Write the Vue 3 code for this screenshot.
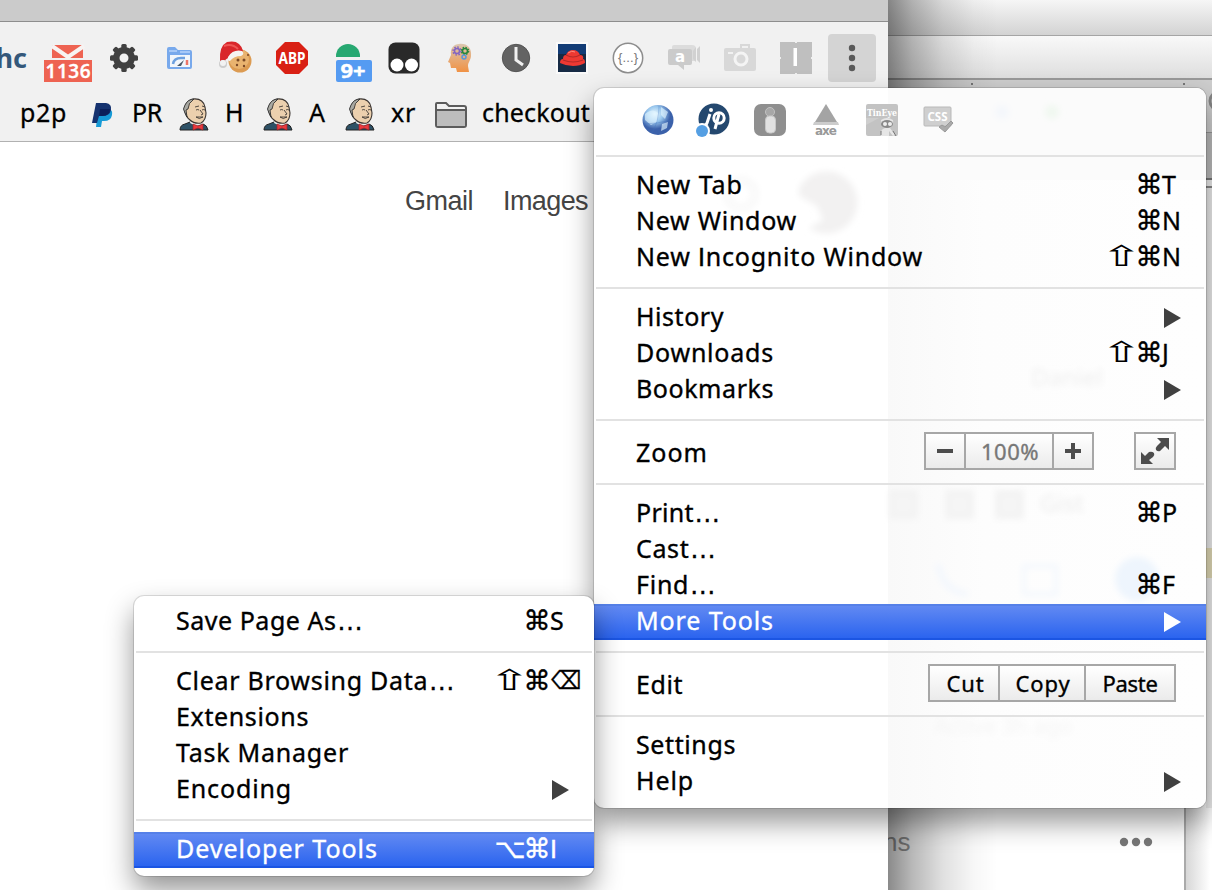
<script setup>
// Spaces a label's letters so that it takes exactly the given width.
const vFit = {
  mounted(el, { value }) {
    const n = el.textContent.trim().length
    if (!value || !n) return
    const natural = el.getBoundingClientRect().width
    el.style.letterSpacing = (value - natural) / n + 'px'
  },
}

// Capital I and the ellipsis are set in their own families.
const parts = (text) => text.split(/(I|…)/).filter(Boolean)
const partClass = (p) => (p === 'I' ? 'bar' : p === '…' ? 'dot3' : '')
const modClass = (s) => (s === '⇧' ? 'shift' : s === '⌥' ? 'option' : 'cmd')

const mainGroups = [
  [
    { label: 'New Tab', w: 107, mods: ['⌘'], key: 'T' },
    { label: 'New Window', w: 161, mods: ['⌘'], key: 'N' },
    { label: 'New Incognito Window', w: 287, mods: ['⇧', '⌘'], key: 'N' },
  ],
  [
    { label: 'History', w: 88, arrow: true },
    { label: 'Downloads', w: 138, mods: ['⇧', '⌘'], key: 'J' },
    { label: 'Bookmarks', w: 138, arrow: true },
  ],
  [{ label: 'Zoom', w: 72, zoom: true }],
  [
    { label: 'Print…', w: 85, mods: ['⌘'], key: 'P' },
    { label: 'Cast…', w: 81 },
    { label: 'Find…', w: 81, mods: ['⌘'], key: 'F' },
    { label: 'More Tools', w: 138, arrow: true, active: true },
  ],
  [{ label: 'Edit', w: 47, edit: true }],
  [
    { label: 'Settings', w: 100 },
    { label: 'Help', w: 58, arrow: true },
  ],
]

const subGroups = [
  [{ label: 'Save Page As…', w: 188, mods: ['⌘'], key: 'S' }],
  [
    { label: 'Clear Browsing Data…', w: 280, mods: ['⇧', '⌘'], key: '⌫', sym: true },
    { label: 'Extensions', w: 133 },
    { label: 'Task Manager', w: 173 },
    { label: 'Encoding', w: 116, arrow: true },
  ],
  [{ label: 'Developer Tools', w: 202, mods: ['⌥', '⌘'], key: 'I', active: true }],
]

const menus = [
  { name: 'main', groups: mainGroups },
  { name: 'sub', groups: subGroups },
]

const bookmarks = [
  { label: 'p2p', w: 47, box: 70 },
  { icon: 'paypal', label: 'PR', w: 30, box: 89 },
  { icon: 'butler', label: 'H', w: 19, box: 84 },
  { icon: 'butler', label: 'A', w: 17, box: 82 },
  { icon: 'butler', label: 'xr', w: 25, box: 88 },
  { icon: 'folder', label: 'checkout', w: 108, box: 160 },
]
const teeth = [0, 45, 90, 135, 180, 225, 270, 315]
</script>

<template>
  <div class="screen">
    <div class="back">
      <div class="b1"></div>
      <div class="b2"></div>
      <div class="b3"></div>
      <div class="b4"></div>
      <div class="b5"></div>
      <div class="b6">
        <div class="tag"></div>
        <span class="ns">ns</span>
        <svg class="dots" width="34" height="10"><g fill="#777"><circle cx="5" cy="5" r="4.2"/><circle cx="17" cy="5" r="4.2"/><circle cx="29" cy="5" r="4.2"/></g></svg>
        <div class="edge"></div>
      </div>
      <svg class="marks" width="324" height="60">
        <rect x="83" y="5" width="2" height="2" fill="#777"/><rect x="295" y="5" width="2" height="2" fill="#777"/>
        <circle cx="331" cy="23" r="9" fill="none" stroke="#858585" stroke-width="3"/>
      </svg>
      <div class="shade"></div>
    </div>

    <div class="window">
      <div class="strip"></div>
      <div class="chrome">
        <div class="tools">
          <div class="tool hc">hc</div>
          <div class="tool"><svg width="48" height="48"><path d="M9 11h30v13H8V13z" fill="#ee6352"/><path d="M8 12l16 11 16-11" fill="none" stroke="#f7f3f2" stroke-width="4"/><rect y="26" width="48" height="22" fill="#ee6352"/><text x="24" y="44" class="count" textLength="45">1136</text></svg></div>
          <div class="tool"><svg width="32" height="32" viewBox="-16 -16 32 32"><circle r="7.7" fill="none" stroke="#404040" stroke-width="6.4"/><rect v-for="a in teeth" :key="a" x="-2.7" y="-14" width="5.4" height="6" rx="1.5" fill="#404040" :transform="`rotate(${a})`"/></svg></div>
          <div class="tool"><svg width="28" height="26"><path d="M1 4q0-2 2-2h6l3 3h12q2 0 2 2v15q0 2-2 2H3q-2 0-2-2z" fill="#78a9ec"/><path d="M4 10h20v12H4z" fill="#f2f6fb"/><path d="M3 6h8m3 1h10" stroke="#b5d2fa" stroke-width="1.500"/><path d="M7 19q1-6 8-6h4" fill="none" stroke="#6da0df" stroke-width="2.500"/><path d="M11 21l7-6-3 6z" fill="#4b5967"/><path d="M21 15v5" stroke="#ed7568" stroke-width="2.500"/></svg></div>
          <div class="tool"><svg width="34" height="34"><circle cx="21" cy="20" r="11.5" fill="#dc9b52"/><circle cx="20" cy="18" r="10" fill="#e9b36f"/><g fill="#7b4926"><circle cx="19" cy="19" r="1.500"/><circle cx="25" cy="19" r="1.500"/><circle cx="18" cy="24" r="1.200"/><circle cx="25" cy="25" r="1.200"/><circle cx="29" cy="14" r="1"/></g><path d="M1 20Q0 5 8 1q13-3 16 9L10 17q-4 0-5 6z" fill="#d9262b"/><path d="M5 5q8-3 14 3" fill="none" stroke="#ef5554" stroke-width="2"/><path d="M9 16q5-8 14-6 3 3-1 5-7 0-11 5-3 0-2-4z" fill="#f5f3f2"/><circle cx="4" cy="23" r="4" fill="#ccc"/><circle cx="4" cy="22" r="3" fill="#f2f2f2"/></svg></div>
          <div class="tool"><svg width="32" height="32"><path d="M9 0h14l9 9v14l-9 9H9l-9-9V9z" fill="#d92014"/><text x="16" y="22" class="abp" textLength="27" lengthAdjust="spacingAndGlyphs">ABP</text></svg></div>
          <div class="tool"><svg width="48" height="48"><path d="M12 23V22a12 12 0 0 1 24 0v1z" fill="#27a871"/><rect x="12" y="26" width="36" height="22" rx="2" fill="#559bf2"/><text x="29" y="44" class="count nine" textLength="25" lengthAdjust="spacingAndGlyphs">9+</text></svg></div>
          <div class="tool"><svg width="32" height="32"><rect x=".5" y=".5" width="31" height="31" rx="7" fill="#292929"/><circle cx="9" cy="23" r="6.5" fill="#fff"/><circle cx="23.500" cy="23" r="6.500" fill="#fff"/></svg></div>
          <div class="tool"><svg width="32" height="32"><defs><linearGradient id="skin" x2="0" y2="1"><stop stop-color="#dcc7b0"/><stop offset="1" stop-color="#f09245"/></linearGradient></defs><path d="M15 2c8-1 13 4 12 12-.5 5-3 6-3 10l1 6H13l-1-4H7l-1-5-2-1 3-7C6 6 10 2 15 2z" fill="url(#skin)"/><g fill="none"><circle cx="13" cy="9" r="2.500" stroke="#8064c4" stroke-width="1.500"/><circle cx="13" cy="9" r="4" stroke="#8064c4" stroke-width="1.500" stroke-dasharray="1.600 1.500"/><circle cx="21" cy="9" r="2.500" stroke="#24873b" stroke-width="1.500"/><circle cx="21" cy="9" r="3.700" stroke="#24873b" stroke-width="1.200" stroke-dasharray="1.500 1.400"/><circle cx="20" cy="15" r="2" stroke="#5b96d6" stroke-width="1.500"/></g></svg></div>
          <div class="tool"><svg width="32" height="32"><circle cx="16" cy="16" r="13.700" fill="#636363" stroke="#555" stroke-width="1"/><path d="M16 5v13l7 5" fill="none" stroke="#f1f1f1" stroke-width="3"/></svg></div>
          <div class="tool"><svg width="32" height="32"><rect width="32" height="32" fill="#fafafa"/><rect x="2" y="2" width="28" height="28" fill="#172b45"/><path d="M2 2h28v10H2z" fill="#123c76"/><path d="M4 21q0-4 3-4 0-4 3-4 2-5 7-5t7 5q4 0 3 4 2 0 2 4-5 3-12 3T4 21z" fill="#ee3932"/><path d="M10 13q7 4 14 0M7 18q10 4 20 0" stroke="#b52a28" stroke-width="1.200" fill="none"/><path d="M12 11q4-3 7-1" stroke="#ff8b7d" fill="none"/></svg></div>
          <div class="tool"><svg width="32" height="32"><circle cx="16" cy="16" r="14.700" fill="#fff" stroke="#8d8d8d" stroke-width="1.500"/><text x="16" y="20" class="brace" textLength="20">{...}</text></svg></div>
          <div class="tool"><svg width="34" height="32"><path d="M5 5q0-2 2-2h18q4 0 4 4v12H5z" fill="#dcdcdc"/><path d="M26 9l3-4v15l-3-3zM30 7l3-3v17l-3-3z" fill="#d1d1d1"/><path d="M1 9q0-2 2-2h20q2 0 2 2v12q0 2-2 2h-6v5l-6-5H3q-2 0-2-2z" fill="#cbcbcb"/><text x="13" y="20" class="a">a</text></svg></div>
          <div class="tool"><svg width="32" height="32"><path d="M0 8q0-2 2-2h14V2h10v4h4q2 0 2 2v19q0 2-2 2H2q-2 0-2-2z" fill="#d8d8d8"/><path d="M18 4h6v2h-6zM4 10h5v2H4z" fill="#f1f1f1"/><circle cx="17" cy="17" r="6" fill="none" stroke="#f4f4f4" stroke-width="3"/></svg></div>
          <div class="tool"><svg width="32" height="32"><rect width="32" height="32" fill="#bfbfbf"/><rect x="13.500" y="6" width="3.500" height="18" fill="#fff"/><path d="M15 0h2v1h-2zM15 31h2v1h-2zM0 15h1v2H0zM31 15h1v2h-1z" fill="#eee"/></svg></div>
          <div class="tool more"><svg width="8" height="28"><g fill="#5a5a5a"><circle cx="4" cy="4" r="3.200"/><circle cx="4" cy="14" r="3.200"/><circle cx="4" cy="24" r="3.200"/></g></svg></div>
        </div>
        <div class="bookmarks">
          <div v-for="(b, i) in bookmarks" :key="i" class="bm" :style="{ width: b.box + 'px' }">
            <svg v-if="b.icon === 'paypal'" class="pp" width="20" height="26"><path d="M6 8h10q5-1 4 5-1 6-8 6h-2l-1 6H4z" fill="#179bd7"/><path d="M4 1h10q6 1 5 7-1 6-9 6H7L5 21H0z" fill="#15326f"/><path d="M8 7h10q0 7-8 7H7z" fill="#0b205a"/></svg>
            <svg v-else-if="b.icon === 'butler'" class="jk" width="29" height="33"><path d="M0 32q0-5 5-6l5-2 13 2q4 1 5 6z" fill="#2d5166" stroke="#222"/><path d="M10 25l6 3 7-2-1-3-11-2z" fill="#eee"/><path d="M5 14Q4 3 13 1q10-1 12 8l1 6q0 7-5 10-7 1-11-3-4-3-5-8z" fill="#ecd0ae" stroke="#3a3430" stroke-width="1.100"/><path d="M5 15q-3-4 0-8Q8 1 14 1 8 5 8 11l-2 1 1 7z" fill="#a8a8a2" stroke="#303030" stroke-width=".9"/><path d="M15 9l4-1m3 0 3 1M16 12q2-1 3 0m3 0q1-1 3 0M20 12l3 4-2 1m-5 2q3 3 7 0-4 0-7 0" fill="none" stroke="#403a35" stroke-width=".9"/><path d="M13 26l5 2 5-2v6l-5-2-5 2z" fill="#ea3a3e" stroke="#a02025" stroke-width=".7"/></svg>
            <svg v-else-if="b.icon === 'folder'" class="fd" width="32" height="26"><path d="M1 23V2q0-1 1-1h9l3 3h15q2 0 2 2v17q0 2-2 2H3q-2 0-2-2z" fill="#f2f2f2" stroke="#5c5c5c" stroke-width="2"/><path d="M2 9h28v15H2z" fill="#bdbdbd"/><path d="M1 8h30" stroke="#5c5c5c" stroke-width="2"/></svg>
            <span class="bl"><span v-fit="b.w" class="fit">{{ b.label }}</span></span>
          </div>
        </div>
      </div>
      <div class="page"><span v-fit="68" class="fit">Gmail</span><span v-fit="85" class="fit">Images</span></div>
    </div>

    <div v-for="m in menus" :key="m.name" class="menu" :class="m.name">
      <svg v-if="m.name === 'main'" class="ghost" width="612" height="720">
        <defs><filter id="soft"><feGaussianBlur stdDeviation="3"/></filter><linearGradient id="fall"><stop stop-color="#f9f9f9"/><stop offset=".3" stop-color="#fdfdfd"/><stop offset="1" stop-color="#fefefe"/></linearGradient></defs>
        <rect x="294" width="318" height="720" fill="url(#fall)"/><rect x="294" width="318" height="92" fill="#fbfbfb"/>
        <g filter="url(#soft)">
          <path d="M205 100a31 31 0 1 1 10 40l14-8-6-14-18-10z" fill="#f2f1f1"/><circle cx="147" cy="106" r="14" fill="none" stroke="#f9f9f9" stroke-width="8"/>
          <g fill="#f5f5f5" stroke="#f3f3f3" stroke-width="6"><rect x="298" y="405" width="23" height="23"/><rect x="354" y="405" width="23" height="23"/><rect x="404" y="405" width="23" height="23"/></g>
          <text x="446" y="424" font-size="24" fill="#ececec">Gist</text><text x="437" y="298" font-size="24" fill="#eee">Daniel</text>
          <circle cx="543" cy="491" r="22" fill="#eef5fd"/><path d="M344 476q5 28 30 30" fill="none" stroke="#f3f7fd" stroke-width="6"/><rect x="430" y="478" width="32" height="28" fill="none" stroke="#f3f7fd" stroke-width="4"/>
          <circle cx="408" cy="24" r="7" fill="#f4f7fb"/><circle cx="458" cy="24" r="7" fill="#f0f8f0"/><text x="340" y="646" font-size="22" fill="#f5f5f5">Active 3h ago</text>
        </g>
      </svg>
      <div class="body">
        <div v-if="m.name === 'main'" class="ext">
          <div><svg width="32" height="32"><defs><radialGradient id="globe" cx=".4" cy=".3"><stop stop-color="#eefaff"/><stop offset=".5" stop-color="#9ac8ee"/><stop offset="1" stop-color="#3b61aa"/></radialGradient></defs><ellipse cx="16" cy="16" rx="15.500" ry="15" fill="url(#globe)"/><path d="M3 10q8-7 14 0l-2 8-6 3-6-5zM19 3l7 5-3 7-4-4zM20 20l6-2-1 6-6 3z" fill="#e0f5ff" opacity=".65"/><path d="M2 20q12 0 28-4M10 29q7-12 7-27" stroke="#3c72bd" fill="none" opacity=".3"/></svg></div>
          <div><svg width="36" height="36"><circle cx="18" cy="17" r="15.500" fill="#24486f"/><circle cx="6" cy="29" r="8" fill="#fff"/><g fill="none" stroke="#fff" stroke-width="3"><path d="M14 12l-3 9q-1 3-4 3M19 27l4-15"/><circle cx="23" cy="16" r="5.200"/></g><circle cx="15" cy="8" r="2" fill="#fff"/><circle cx="6" cy="29" r="6" fill="#559fe3"/></svg></div>
          <div><svg width="32" height="32"><rect width="32" height="32" rx="7" fill="#8f8f8f"/><circle cx="16" cy="8" r="4.500" fill="#a7a7a7" stroke="#c2c2c2"/><rect x="11.500" y="12" width="10" height="17" rx="4" fill="#e1e1e1" stroke="#c7c7c7"/></svg></div>
          <div><svg width="32" height="32"><path d="M16 0l11 18H5z" fill="#a4a4a4"/><path d="M4 18h24l1 3H3z" fill="#ccc"/><text x="16" y="31" class="axe" textLength="22">axe</text></svg></div>
          <div><svg width="32" height="32"><rect width="32" height="32" rx="2" fill="#c3c3c3"/><path d="M0 21l13-7H0z" fill="#cecece"/><path d="M15 32q-1-7 4-8-5-4-4-8 6-4 12 0 1 4-3 8l5 7-2 1-4-5v5z" fill="#e6e6e6"/><ellipse cx="21" cy="20" rx="6" ry="4" fill="#888"/><circle cx="19" cy="20" r="2" fill="#eee"/><circle cx="24" cy="20" r="2" fill="#eee"/><path d="M15 31v-4m12 0 3 5" stroke="#777"/><text x="16" y="12" class="tin" textLength="30" lengthAdjust="spacingAndGlyphs">TinEye</text></svg></div>
          <div><svg width="32" height="32"><rect x="2" y="3" width="27" height="19" rx="1" fill="#cfcfcf" stroke="#b9b9b9"/><text x="15.500" y="17" class="css" textLength="20" lengthAdjust="spacingAndGlyphs">CSS</text><path d="M17 23l3-2 3 2 6-6 2 2-8 9z" fill="#aaa" stroke="#999"/></svg></div>
        </div>
        <template v-for="(g, gi) in m.groups" :key="gi">
          <div v-if="gi || m.name === 'main'" class="sep"></div>
          <div v-for="it in g" :key="it.label" class="row" :class="{ active: it.active, tall: it.zoom || it.edit }">
            <span v-fit="it.w" class="fit"><span v-for="(p, pi) in parts(it.label)" :key="pi" :class="partClass(p)">{{ p }}</span></span>
            <span v-if="it.key" class="keys"><span v-for="s in it.mods" :key="s" class="mod"><span :class="modClass(s)">{{ s }}</span></span><span class="key" :class="[{ sym: it.sym }, partClass(it.key)]"><span>{{ it.key }}</span></span></span>
            <svg v-if="it.arrow" class="arrow" width="17" height="20"><path d="M0 0l17 10L0 20z"/></svg>
            <span v-if="it.zoom" class="controls">
              <span class="btns"><span class="btn z1"><svg width="16" height="16"><path d="M0 6h16v4H0z"/></svg></span><span class="btn z2"><span v-fit="58" class="fit">100%</span></span><span class="btn z3"><svg width="16" height="16"><path d="M0 6h6V0h4v6h6v4h-6v6H6v-6H0z"/></svg></span></span>
              <span class="btns"><span class="btn full"><svg width="28" height="26"><path d="M16 0h12v12l-4-4-5 5q-2 1-4-1-1-2 1-4l4-4zM0 26V14l4 4 4-4q3-1 5 1 1 2-1 4l-4 3 4 4z"/></svg></span></span>
            </span>
            <span v-if="it.edit" class="controls"><span class="btns"><span class="btn e1"><span v-fit="38" class="fit">Cut</span></span><span class="btn e2"><span v-fit="55" class="fit">Copy</span></span><span class="btn e3"><span v-fit="55" class="fit">Paste</span></span></span></span>
          </div>
        </template>
      </div>
    </div>
  </div>
</template>

<style>
html, body { overflow: hidden; }
</style>

<style scoped>
* { box-sizing: border-box; }
.screen { position: relative; width: 1212px; height: 890px; overflow: hidden; background: #fff; font-family: "Noto Sans", "Open Sans", sans-serif; font-size: 25px; color: #000; }
.fit { display: inline-block; white-space: nowrap; }
svg { display: block; overflow: visible; flex: none; }
.back { position: absolute; left: 888px; top: 0; width: 324px; height: 890px; background: #fff; }
.b1 { height: 36px; background: linear-gradient(#f6f6f6, #d3d3d3); border-bottom: 1px solid #a5a5a5; }
.b2 { height: 44px; background: linear-gradient(#f9f9f9, #dedede); border-bottom: 2px solid #999; }
.b3 { height: 53px; background: #cecece; border-bottom: 1px solid #989898; }
.b4 { height: 47px; background: #bcbcbc; border-bottom: 2px solid #777; }
.b5 { height: 8px; background: #eee; border-bottom: 2px solid #888; }
.b6 { position: relative; height: 702px; background: linear-gradient(90deg, #fff 0 296px, #aaa 296px 298px, #d7d7d7 298px, #fff 322px); }
.tag { position: absolute; left: 316px; top: 360px; width: 8px; height: 30px; background: #f0e8bb; }
.edge { position: absolute; left: 318px; top: 0; width: 6px; height: 620px; background: rgba(170,170,170,.2); }
.ns { position: absolute; left: -5px; top: 639px; font: 26px "Liberation Sans", Arial, sans-serif; color: #999; }
.dots { position: absolute; left: 231px; top: 649px; }
.marks { position: absolute; left: 0; top: 78px; overflow: hidden; }
.shade { position: absolute; left: 0; top: 0; width: 110px; height: 890px; background: linear-gradient(90deg, rgba(0,0,0,.46), rgba(0,0,0,.28) 22%, rgba(0,0,0,.12) 50%, rgba(0,0,0,.03) 78%, transparent); }
.window { position: absolute; left: 0; top: 0; width: 888px; height: 890px; background: #fff; display: flex; flex-direction: column; overflow: hidden; }
.strip { height: 22px; background: #cbcbcb; border-bottom: 1px solid #8e8e8e; }
.chrome { height: 120px; background: #f1f1f1; border-bottom: 1px solid #b1b1b1; padding-top: 12px; }
.tools { display: flex; margin-left: -12px; gap: 8px; }
.tool { flex: none; width: 48px; height: 48px; display: flex; align-items: center; justify-content: center; }
.hc { color: #34587a; font: bold 27px "Noto Sans", sans-serif; justify-content: flex-end; padding: 0 9px 2px 0; }
.more { background: #d4d4d4; border-radius: 4px; }
.count { font: 600 19px "Open Sans", "Noto Sans", sans-serif; fill: #fff; text-anchor: middle; stroke: #fff; stroke-width: .4px; }
.nine { font-weight: bold; }
.abp { font: bold 16px "Noto Sans", sans-serif; fill: #fff; text-anchor: middle; }
.brace { font: 13px "Liberation Sans", sans-serif; fill: #777; text-anchor: middle; }
.a { font: bold 15px "DejaVu Sans", sans-serif; fill: #fff; text-anchor: middle; }
.axe { font: bold 12px "DejaVu Sans", sans-serif; fill: #999; text-anchor: middle; }
.tin { font: bold 9px "DejaVu Serif", serif; fill: #fff; text-anchor: middle; }
.css { font: bold 13px "Noto Sans", sans-serif; fill: #fff; text-anchor: middle; }
.bookmarks { display: flex; height: 60px; margin-top: 2px; padding-left: 20px; }
.bm { flex: none; height: 60px; display: flex; align-items: center; }
.bl { margin-top: -4px; -webkit-text-stroke: .3px #000; }
.pp { margin: 1px 20px 0 2px; }
.jk { margin: 1px 16px 0 1px; }
.fd { margin: 1px 15px 0 2px; }
.page { display: flex; gap: 30px; margin: 43px 0 0 405px; font: 27px/32px "Liberation Sans", Arial, sans-serif; color: #444; }
.menu { position: absolute; background: #fff; border-radius: 10px; box-shadow: 0 0 0 1px rgba(0,0,0,.12), 0 14px 28px rgba(0,0,0,.42); }
.main { left: 594px; top: 88px; width: 612px; height: 720px; }
.sub { left: 134px; top: 596px; width: 460px; height: 280px; }
.ghost { position: absolute; left: 0; top: 0; overflow: hidden; border-radius: 10px; }
.body { position: relative; padding-top: 8px; }
.ext { height: 48px; display: flex; padding-left: 36px; }
.ext div { width: 56px; height: 48px; display: flex; align-items: center; justify-content: center; }
.sep { height: 24px; padding: 11px 2px; }
.sep::before { content: ""; display: block; height: 2px; background: #e2e2e2; }
.row { height: 36px; display: flex; align-items: center; padding-left: 42px; line-height: 32px; padding-bottom: 4px; -webkit-text-stroke: .35px currentColor; }
.row.tall { height: 40px; padding-bottom: 0; }
.row.active { color: #fff; background: linear-gradient(#5580e8 0 2px, #6189f2 2px, #2b64ef 34px, #1b55e3 34px); }
.bar { font-family: Lato, "Liberation Sans", sans-serif; font-size: 25px; }
.dot3 { font-family: "Liberation Sans", Arial, sans-serif; font-size: 27px; line-height: 20px; }
.keys { margin-left: auto; display: flex; align-items: center; }
.mod { width: 28px; font-family: "DejaVu Sans", sans-serif; font-size: 27px; display: flex; justify-content: center; }
.mod span, .sym span { display: inline-block; }
.cmd { transform: translate(2px, 1px); }
.shift { transform: translate(2px, 1px) scale(1.85, 1.05); -webkit-text-stroke: 0; }
.option { transform: translate(3px, 1px) scaleX(1); }
.key { width: 45px; padding-left: 1px; }
.keys .mod:first-child { margin-left: 0; }
.key.sym { font-family: "DejaVu Sans", sans-serif; }
.sym span { transform: translate(1px, 1px) scaleX(.85); transform-origin: 0 50%; }
.arrow { margin: 4px 25px 0 auto; fill: #404040; }
.active .arrow { fill: #fff; }
.controls { margin: -2px 30px 0 auto; display: flex; gap: 40px; font-size: 22px; }
.btns { display: flex; height: 38px; border: 2px solid #a7a7a7; background: linear-gradient(#fff, #ebebeb); }
.btn { display: flex; align-items: center; justify-content: center; fill: #4c4c4c; }
.btn + .btn { border-left: 2px solid #a7a7a7; }
.z1 { width: 38px; }
.z2 { width: 88px; color: #777; padding-left: 2px; }
.z3 { width: 40px; }
.full { width: 38px; }
.e1 { width: 68px; padding-left: 3px; }
.e2 { width: 86px; padding-left: 2px; }
.e3 { width: 90px; }
</style>
